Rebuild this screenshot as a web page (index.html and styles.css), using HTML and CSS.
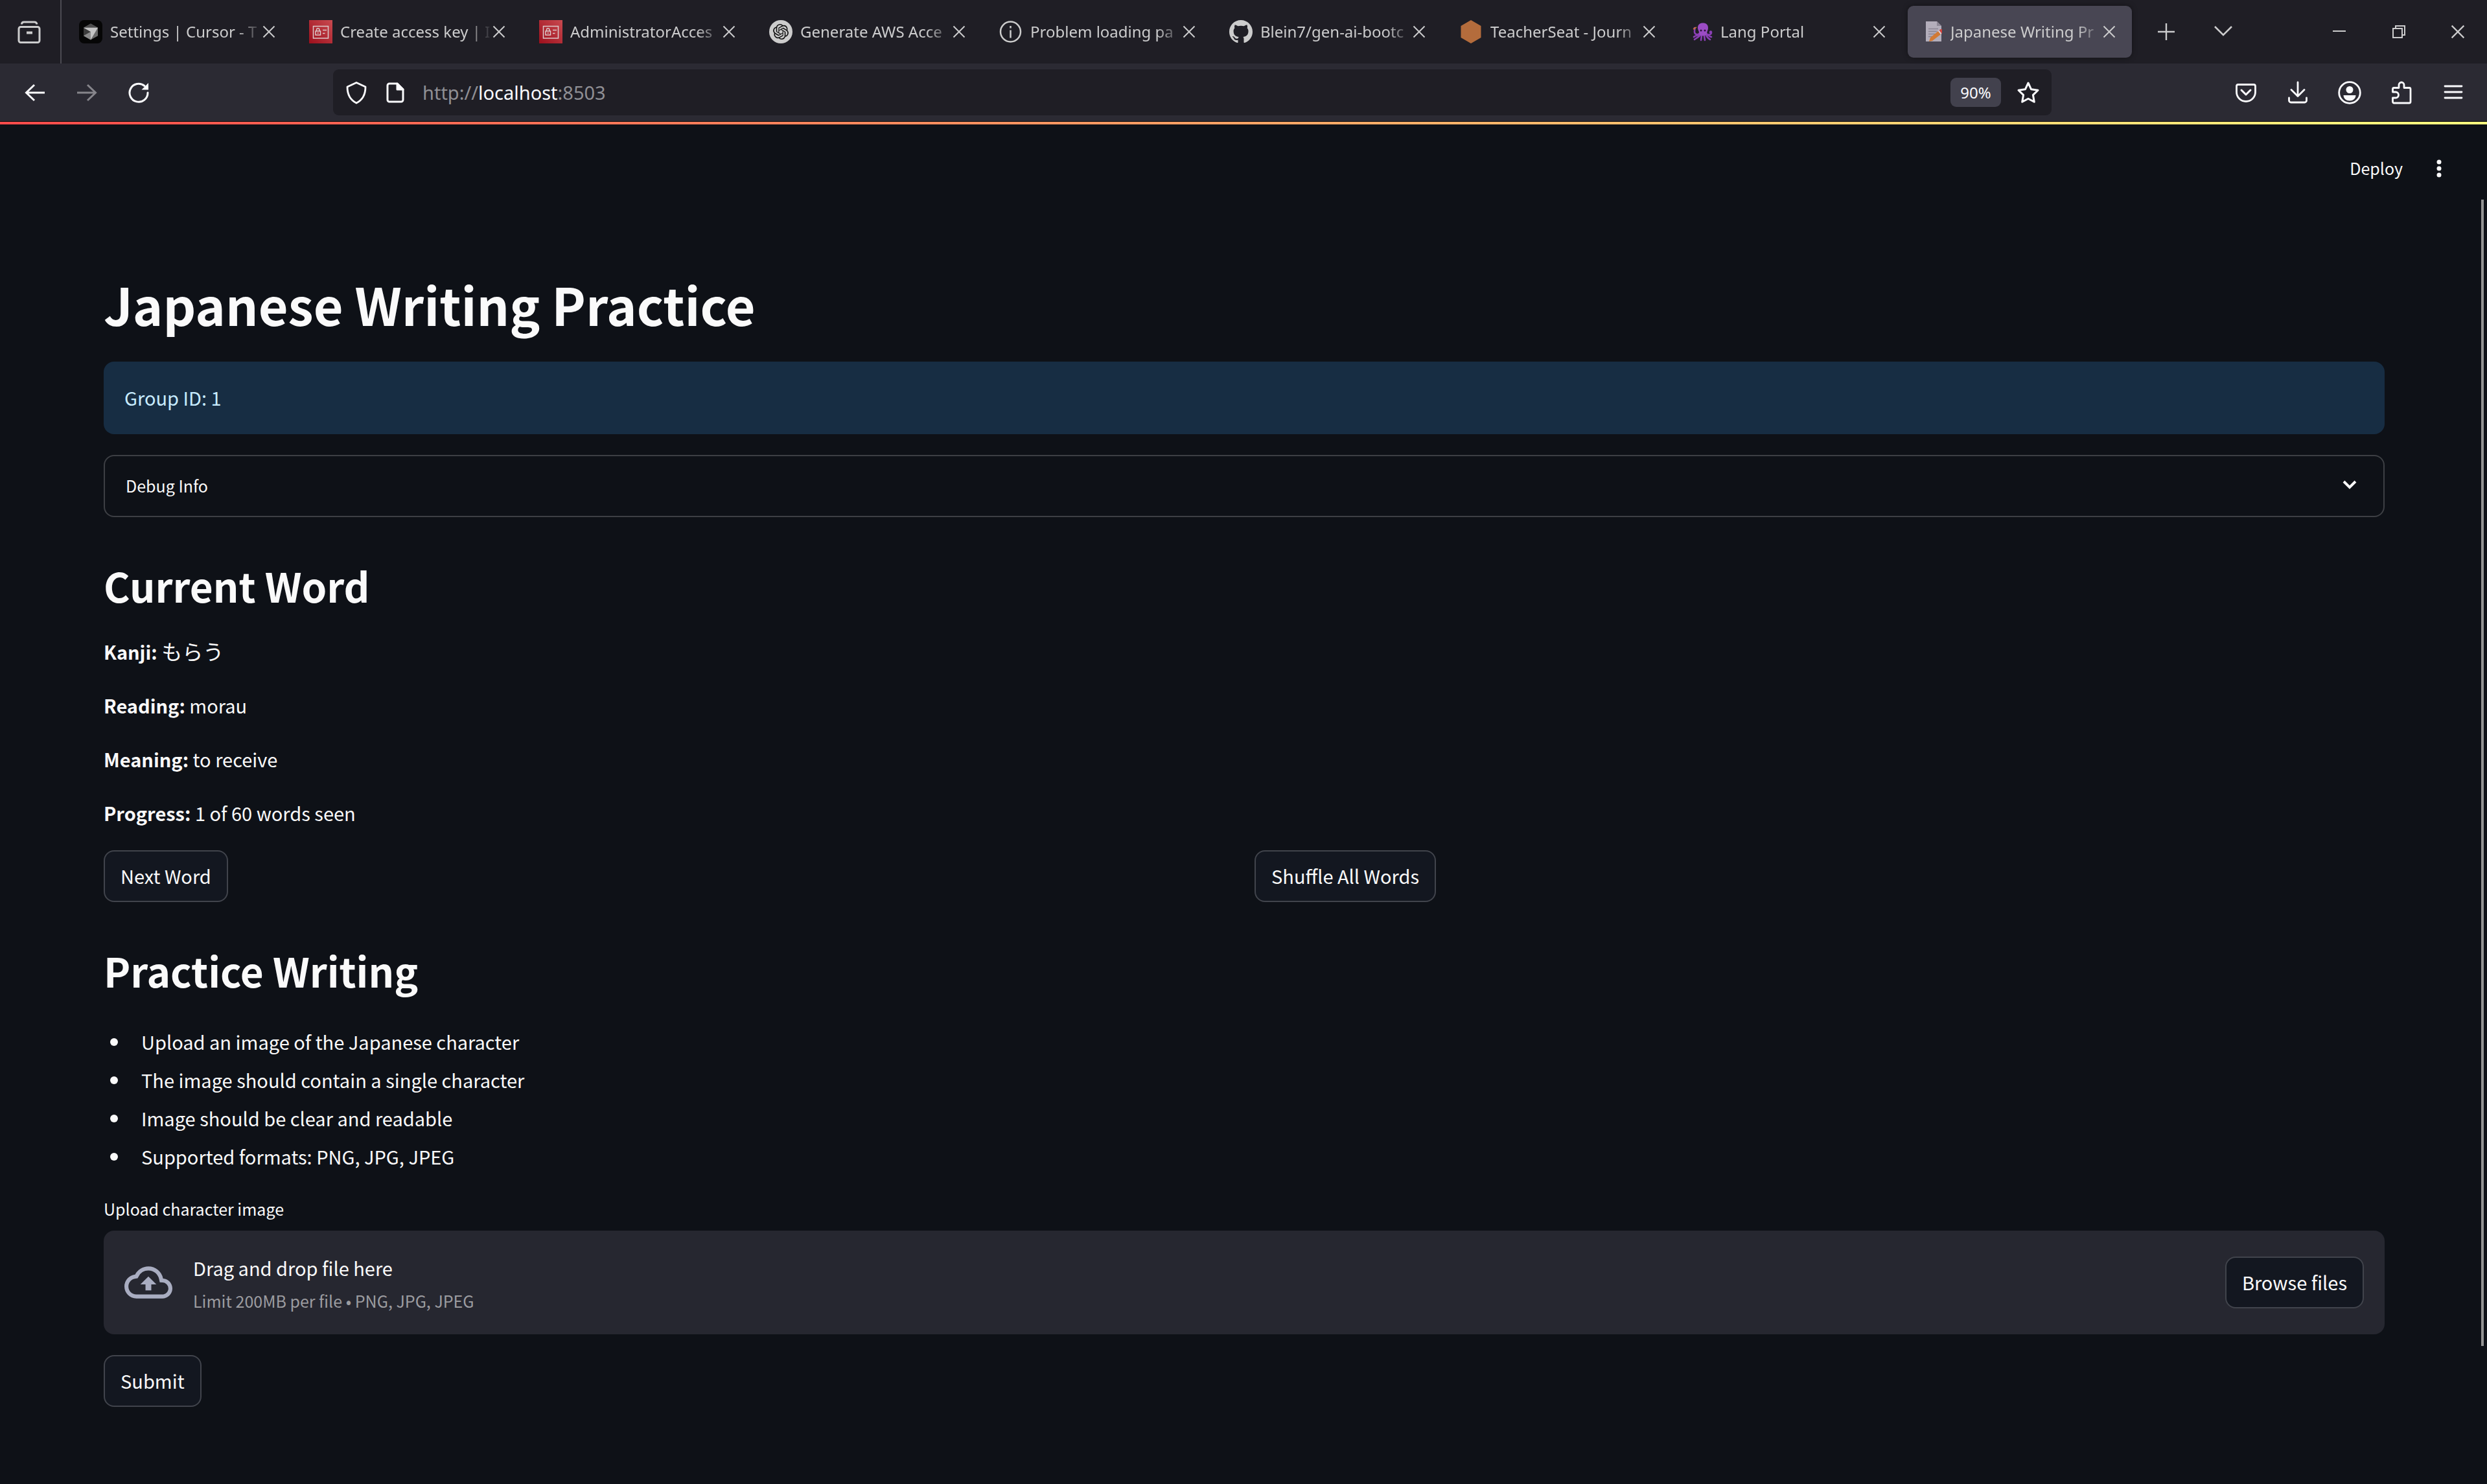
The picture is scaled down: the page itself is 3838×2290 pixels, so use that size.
FILE: index.html
```html
<!DOCTYPE html>
<html lang="en">
<head>
<meta charset="utf-8">
<title>Japanese Writing Practice</title>
<meta name="viewport" content="width=device-width, initial-scale=1">
<link rel="stylesheet" href="styles.css">
</head>
<body>
<svg class="sprite" aria-hidden="true">
  <symbol id="i-close" viewBox="0 0 20 20"><path d="M1.500 1.500l17 17M18.500 1.500l-17 17" fill="none" stroke="currentColor" stroke-width="2"/></symbol>
  <symbol id="i-key" viewBox="0 0 36 36">
    <rect width="36" height="36" fill="url(#red)"/>
    <g fill="none" stroke="#dcc9ca" stroke-width="1.500"><rect x="6.500" y="9.500" width="23" height="18.500"/><rect x="10" y="17" width="7.500" height="6"/><path d="M11.500 17v-2a2.200 2.200 0 0 1 4.400 0V17M21 15.500h6M21 20.500h3.500M13.700 19v2"/></g>
  </symbol>
  <linearGradient id="red" x1="0" y1="1" x2="1" y2="0"><stop offset="0" stop-color="#9c0f1c"/><stop offset="1" stop-color="#c94a50"/></linearGradient>
</svg>

<header class="browser">
  <div class="tabstrip">
    <button class="icon-btn view-btn" aria-label="Recent browsing">
      <svg width="36" height="36" viewBox="0 0 36 36" fill="none" stroke="currentColor" stroke-width="3"><rect x="2" y="10.500" width="32" height="24" rx="3"/><path d="M6.500 6.500Q6.500 3 10 3h16q3.500 0 4 3.500"/><path d="M14 19.500h9" stroke-width="4"/></svg>
    </button>
    <nav class="tabs" aria-label="Tabs">
      <div class="tab">
        <svg class="favicon" viewBox="0 0 36 36"><rect width="36" height="36" rx="8" fill="#060606"/><path d="M18 5.500l11 6.200v12.600l-11 6.200-11-6.200V11.700z" fill="#6a6a6a"/><path d="M7 11.700L18 5.500l11 6.200z" fill="#4b4b4b"/><path d="M7 11.700L18 18 7 24.300z" fill="#3c3c3c"/><path d="M7 24.300L18 18v12.500z" fill="#8b8b8b"/><path d="M7 11.700h22L18 30.500V18z" fill="#c4c4c4"/></svg>
        <button class="tab-title">Settings | Cursor - T</button>
        <button class="tab-close" aria-label="Close tab"><svg><use href="#i-close"/></svg></button>
      </div>
      <div class="tab">
        <svg class="favicon"><use href="#i-key"/></svg>
        <button class="tab-title">Create access key | I</button>
        <button class="tab-close" aria-label="Close tab"><svg><use href="#i-close"/></svg></button>
      </div>
      <div class="tab">
        <svg class="favicon"><use href="#i-key"/></svg>
        <button class="tab-title">AdministratorAcces</button>
        <button class="tab-close" aria-label="Close tab"><svg><use href="#i-close"/></svg></button>
      </div>
      <div class="tab">
        <svg class="favicon" viewBox="0 0 36 36"><circle cx="18" cy="18" r="18" fill="#ccc"/><path transform="translate(6 6)" fill="#111" d="M22.2819 9.8211a5.9847 5.9847 0 0 0-.5157-4.9108 6.0462 6.0462 0 0 0-6.5098-2.9A6.0651 6.0651 0 0 0 4.9807 4.1818a5.9847 5.9847 0 0 0-3.9977 2.9 6.0462 6.0462 0 0 0 .7427 7.0966 5.98 5.98 0 0 0 .511 4.9107 6.051 6.051 0 0 0 6.5146 2.9001A5.9847 5.9847 0 0 0 13.2599 24a6.0557 6.0557 0 0 0 5.7718-4.2058 5.9894 5.9894 0 0 0 3.9977-2.9001 6.0557 6.0557 0 0 0-.7475-7.0729zm-9.022 12.6081a4.4755 4.4755 0 0 1-2.8764-1.0408l.1419-.0804 4.7783-2.7582a.7948.7948 0 0 0 .3927-.6813v-6.7369l2.02 1.1686a.071.071 0 0 1 .038.052v5.5826a4.504 4.504 0 0 1-4.4945 4.4944zm-9.6607-4.1254a4.4708 4.4708 0 0 1-.5346-3.0137l.142.0852 4.783 2.7582a.7712.7712 0 0 0 .7806 0l5.8428-3.3685v2.3324a.0804.0804 0 0 1-.0332.0615L9.74 19.9502a4.4992 4.4992 0 0 1-6.1408-1.6464zM2.3408 7.8956a4.485 4.485 0 0 1 2.3655-1.9728V11.6a.7664.7664 0 0 0 .3879.6765l5.8144 3.3543-2.0201 1.1685a.0757.0757 0 0 1-.071 0l-4.8303-2.7865A4.504 4.504 0 0 1 2.3408 7.872zm16.5963 3.8558L13.1038 8.364 15.1192 7.2a.0757.0757 0 0 1 .071 0l4.8303 2.7913a4.4944 4.4944 0 0 1-.6765 8.1042v-5.6772a.79.79 0 0 0-.407-.667zm2.0107-3.0231l-.142-.0852-4.7735-2.7818a.7759.7759 0 0 0-.7854 0L9.409 9.2297V6.8974a.0662.0662 0 0 1 .0284-.0615l4.8303-2.7866a4.4992 4.4992 0 0 1 6.6802 4.66zM8.3065 12.863l-2.02-1.1638a.0804.0804 0 0 1-.038-.0567V6.0742a4.4992 4.4992 0 0 1 7.3757-3.4537l-.142.0805L8.704 5.459a.7948.7948 0 0 0-.3927.6813zm1.0976-2.3654l2.602-1.4998 2.6069 1.4998v2.9994l-2.5974 1.4997-2.6067-1.4997Z"/></svg>
        <button class="tab-title">Generate AWS Acce</button>
        <button class="tab-close" aria-label="Close tab"><svg><use href="#i-close"/></svg></button>
      </div>
      <div class="tab">
        <svg class="favicon" viewBox="0 0 36 36" fill="none" stroke="#ccc" stroke-width="2.500"><circle cx="17.500" cy="18" r="15.500"/><path d="M17.500 15.500v12M17.500 9v3.500"/></svg>
        <button class="tab-title">Problem loading pa</button>
        <button class="tab-close" aria-label="Close tab"><svg><use href="#i-close"/></svg></button>
      </div>
      <div class="tab">
        <svg class="favicon" viewBox="0 0 16 16"><path fill="#ccc" d="M8 0C3.580 0 0 3.580 0 8c0 3.540 2.290 6.530 5.470 7.590.4.070.55-.17.55-.38 0-.19-.01-.82-.01-1.490-2.010.37-2.530-.49-2.690-.94-.09-.23-.48-.94-.82-1.130-.28-.15-.68-.52-.01-.53.63-.01 1.080.58 1.230.82.72 1.210 1.870.87 2.330.66.070-.52.28-.87.51-1.070-1.780-.2-3.640-.89-3.640-3.950 0-.87.31-1.590.82-2.150-.08-.2-.36-1.020.08-2.120 0 0 .67-.21 2.200.82.64-.18 1.320-.27 2-.27s1.360.09 2 .27c1.530-1.040 2.200-.82 2.200-.82.44 1.100.16 1.920.08 2.120.51.56.82 1.270.82 2.150 0 3.070-1.870 3.750-3.650 3.950.29.25.54.73.54 1.480 0 1.070-.01 1.930-.01 2.200 0 .21.15.46.55.38A8.010 8.010 0 0 0 16 8c0-4.420-3.580-8-8-8z"/></svg>
        <button class="tab-title">Blein7/gen-ai-bootc</button>
        <button class="tab-close" aria-label="Close tab"><svg><use href="#i-close"/></svg></button>
      </div>
      <div class="tab">
        <svg class="favicon" viewBox="0 0 36 36"><path d="M18 0l15.500 9v18L18 36 2.500 27V9z" fill="#b46c3c"/></svg>
        <button class="tab-title">TeacherSeat - Journ</button>
        <button class="tab-close" aria-label="Close tab"><svg><use href="#i-close"/></svg></button>
      </div>
      <div class="tab">
        <svg class="favicon" viewBox="0 0 36 36"><g fill="none" stroke="#8a3fb5" stroke-width="2.600" stroke-linecap="round"><path d="M16 20c-3 4-8 2-8-2s1-3 0-6M26 20c2 4 8 3 8-1 0-2-2-2-2 0M15 22c-3 3-5 1-8 4M27 22c3 1 4 4 7 4M17 23c-2 3-5 4-9 7M19 24l-1 7M23 24l1 7M26 23c1 3 3 5 6 7"/></g><path d="M13 12c0-5 3-7.500 8-7.500s8 2.500 8 7.500c0 4-2 5-2 10-3 3-9 3-12 0 1-5-2-6-2-10z" fill="#9b4cc4"/><circle cx="18" cy="16" r="1.500" fill="#2b1238"/><circle cx="24" cy="16" r="1.500" fill="#2b1238"/><path d="M6 14l5-3" stroke="#d07a30" stroke-width="1.500"/></svg>
        <button class="tab-title">Lang Portal</button>
        <button class="tab-close" aria-label="Close tab"><svg><use href="#i-close"/></svg></button>
      </div>
      <div class="tab is-active">
        <svg class="favicon" viewBox="0 0 36 36"><path d="M10 2h17l7 7v24H10z" fill="#b3aebb"/><path d="M27 2v7h7z" fill="#8d8896"/><path d="M14 13.500h15M14 17.500h13M14 21.500h10M14 25.500h6" stroke="#8a8592" stroke-width="1.500"/><path d="M17 27L29 17l4 5-13 10-5 1z" fill="#d27a35"/><path d="M29 17l1.500-1.200 4 5L33 22z" fill="#ddd5dc"/><path d="M30.500 15.800L33 14h2v6.500l-.5.300z" fill="#d0453f"/></svg>
        <button class="tab-title">Japanese Writing Pr</button>
        <button class="tab-close" aria-label="Close tab"><svg><use href="#i-close"/></svg></button>
      </div>
    </nav>
    <div class="strip-actions">
      <button class="icon-btn" aria-label="New tab"><svg width="28" height="28" viewBox="0 0 28 28"><path d="M14 1v26M1 14h26" stroke="currentColor" stroke-width="2.400"/></svg></button>
      <button class="icon-btn" aria-label="List all tabs"><svg width="28" height="28" viewBox="0 0 28 28" fill="none"><path d="M1 6l13 13L27 6" stroke="currentColor" stroke-width="2.600"/></svg></button>
    </div>
    <div class="window-controls">
      <button class="icon-btn" aria-label="Minimize"><svg width="22" height="22" viewBox="0 0 22 22"><path d="M1 10h20" stroke="currentColor" stroke-width="2"/></svg></button>
      <button class="icon-btn" aria-label="Restore"><svg width="22" height="22" viewBox="0 0 22 22" fill="none" stroke="currentColor" stroke-width="2"><rect x="2" y="6" width="14" height="14"/><path d="M6 6V2h14v14h-4"/></svg></button>
      <button class="icon-btn" aria-label="Close window"><svg width="22" height="22"><use href="#i-close"/></svg></button>
    </div>
  </div>

  <div class="toolbar">
    <div class="nav-actions">
      <button class="icon-btn" aria-label="Back"><svg width="36" height="36" viewBox="0 0 36 36" fill="none" stroke="currentColor" stroke-width="3"><path d="M33 18H4M17 6L4.500 18 17 30"/></svg></button>
      <button class="icon-btn is-disabled" aria-label="Forward"><svg width="36" height="36" viewBox="0 0 36 36" fill="none" stroke="currentColor" stroke-width="3"><path d="M3 18h29M19 6l12.500 12L19 30"/></svg></button>
      <button class="icon-btn" aria-label="Reload"><svg width="36" height="36" viewBox="0 0 36 36" fill="none" stroke="currentColor" stroke-width="3" stroke-linecap="round"><path d="M32 18a14 14 0 1 1-5-10.500"/><path d="M33 3v10.500H22.500z" fill="currentColor" stroke="none"/></svg></button>
    </div>
    <div class="urlbar">
      <button class="icon-btn" aria-label="Tracking protection"><svg width="36" height="36" viewBox="0 0 36 36" fill="none" stroke="currentColor" stroke-width="2.800" stroke-linejoin="round"><path d="M18 2.500l14 6.500c0 12-4 20-14 25C8 29 4 21 4 9z"/></svg></button>
      <button class="icon-btn" aria-label="Site information"><svg width="36" height="36" viewBox="0 0 36 36" fill="none" stroke="currentColor" stroke-width="3" stroke-linejoin="round"><path d="M21 4H9a3 3 0 0 0-3 3v22a3 3 0 0 0 3 3h18a3 3 0 0 0 3-3V13z"/><path d="M21 4v9h9z" fill="currentColor"/></svg></button>
      <a class="url" href="#">http://<b>localhost</b>:8503</a>
      <button class="zoom">90%</button>
      <button class="icon-btn" aria-label="Bookmark"><svg width="36" height="36" viewBox="0 0 36 36" fill="none" stroke="currentColor" stroke-width="3" stroke-linejoin="round"><path d="M18 3l4.600 9.800L33 14.200l-7.600 7.400 1.900 10.700L18 27.200l-9.300 5.100 1.900-10.700L3 14.200l10.400-1.400z"/></svg></button>
    </div>
    <div class="tool-actions">
      <button class="icon-btn" aria-label="Save to Pocket"><svg width="36" height="36" viewBox="0 0 36 36" fill="none" stroke="currentColor" stroke-width="2.800" stroke-linecap="round" stroke-linejoin="round"><path d="M3.500 8a2.500 2.500 0 0 1 2.500-2.500h24A2.500 2.500 0 0 1 32.500 8v9a14.500 14.500 0 0 1-29 0z"/><path d="M11 14l7 7 7-7" stroke-width="3"/></svg></button>
      <button class="icon-btn" aria-label="Downloads"><svg width="36" height="36" viewBox="0 0 36 36" fill="none" stroke="currentColor" stroke-width="2.800" stroke-linecap="round" stroke-linejoin="round"><path d="M18 2v21M8 13.500l10 10 10-10M4.500 26v4a3 3 0 0 0 3 3h21a3 3 0 0 0 3-3v-4"/></svg></button>
      <button class="icon-btn" aria-label="Account"><svg width="36" height="36" viewBox="0 0 36 36"><circle cx="18" cy="18" r="16.300" fill="none" stroke="currentColor" stroke-width="2.800"/><circle cx="18" cy="13.500" r="5.500" fill="currentColor"/><path d="M8.500 22h19c0 5-4.500 8.500-9.500 8.500S8.500 27 8.500 22z" fill="currentColor"/></svg></button>
      <button class="icon-btn" aria-label="Extensions"><svg width="36" height="36" viewBox="0 0 36 36" fill="none" stroke="currentColor" stroke-width="2.800" stroke-linejoin="round"><path d="M4.500 17v-4.500a2 2 0 0 1 2-2h7.500V6a4 4 0 0 1 8 0v4.500h8a2 2 0 0 1 2 2V32a2 2 0 0 1-2 2H6.500a2 2 0 0 1-2-2v-6H9a4.500 4.500 0 0 0 0-9z"/></svg></button>
      <button class="icon-btn" aria-label="Menu"><svg width="36" height="36" viewBox="0 0 36 36"><path d="M5 8h26M5 17h26M5 26h26" stroke="currentColor" stroke-width="2.800" stroke-linecap="round"/></svg></button>
    </div>
  </div>
</header>

<div class="app">
  <div class="decoration"></div>
  <header class="app-header">
    <button class="deploy">Deploy</button>
    <button class="icon-btn" aria-label="Main menu"><svg width="36" height="36" viewBox="0 0 36 36" fill="currentColor"><circle cx="18" cy="8" r="3.500"/><circle cx="18" cy="18" r="3.500"/><circle cx="18" cy="28" r="3.500"/></svg></button>
  </header>
  <div class="scroll-thumb"></div>

  <main class="content">
    <h1>Japanese Writing Practice</h1>
    <div class="alert" role="status">Group ID: 1</div>
    <details class="expander">
      <summary>Debug Info<svg width="36" height="36" viewBox="0 0 36 36" fill="none"><path d="M9 12l9 9 9-9" stroke="currentColor" stroke-width="4"/></svg></summary>
    </details>

    <h2>Current Word</h2>
    <p><strong>Kanji:</strong> <span class="kana" lang="ja">もらう</span></p>
    <p><strong>Reading:</strong> morau</p>
    <p><strong>Meaning:</strong> to receive</p>
    <p><strong>Progress:</strong> 1 of 60 words seen</p>
    <div class="columns">
      <div><button class="btn">Next Word</button></div>
      <div><button class="btn">Shuffle All Words</button></div>
    </div>

    <h2>Practice Writing</h2>
    <ul class="notes">
      <li>Upload an image of the Japanese character</li>
      <li>The image should contain a single character</li>
      <li>Image should be clear and readable</li>
      <li>Supported formats: PNG, JPG, JPEG</li>
    </ul>
    <label class="upload-label" for="browse">Upload character image</label>
    <section class="dropzone">
      <svg class="cloud" viewBox="0 0 24 24" fill="currentColor"><path d="M19.350 10.040A7.490 7.490 0 0 0 12 4C9.110 4 6.600 5.640 5.350 8.040A5.994 5.994 0 0 0 0 14c0 3.310 2.690 6 6 6h13c2.760 0 5-2.240 5-5 0-2.640-2.050-4.780-4.650-4.960zM19 18H6c-2.210 0-4-1.790-4-4 0-2.050 1.530-3.760 3.560-3.970l1.070-.11.5-.95A5.469 5.469 0 0 1 12 6c2.620 0 4.880 1.860 5.390 4.430l.3 1.500 1.530.11A2.980 2.980 0 0 1 22 15c0 1.650-1.350 3-3 3zM8 13h2.550v3h2.900v-3H16l-4-4z"/></svg>
      <div class="drop-text">
        <span>Drag and drop file here</span>
        <small>Limit 200MB per file • PNG, JPG, JPEG</small>
      </div>
      <button class="btn" id="browse">Browse files</button>
    </section>
    <button class="btn">Submit</button>
  </main>
</div>
</body>
</html>
```

FILE: styles.css
```css
:root {
  --ui: "Noto Sans", "Open Sans", sans-serif;
  --app: "Noto Sans CJK JP", sans-serif;
  --text: #fafafa;
  --line: rgba(250, 250, 250, 0.2);
}

* { box-sizing: border-box; }

body {
  margin: 0;
  min-height: 100vh;
  display: flex;
  flex-direction: column;
  background: #0e1117;
  color: var(--text);
  font: 29px/51px var(--app);
}

button {
  margin: 0;
  padding: 0;
  border: 0;
  background: none;
  color: inherit;
  font: inherit;
}

svg { display: block; }
.sprite { position: absolute; width: 0; height: 0; }

.icon-btn {
  display: grid;
  place-items: center;
  flex: none;
}

/* Browser frame */
.browser {
  background: #2b2a33;
  color: #fbfbfe;
  font: 24px/32px var(--ui);
  border-bottom: 1px solid #0c0c0d;
}

.tabstrip {
  display: flex;
  height: 98px;
  background: #1f1e25;
  color: #cccccd;
}

.view-btn {
  width: 95px;
  padding-right: 4px;
  border-right: 2px solid #4b4a52;
}

.tabs {
  display: flex;
  flex: 0 1 3204px;
  gap: 9px;
  padding: 9px;
  min-width: 0;
}

.tab {
  display: flex;
  align-items: center;
  flex: 1;
  min-width: 0;
  padding: 0 25px 0 18px;
  border-radius: 9px;
}

.tab.is-active {
  background: #484653;
  box-shadow: 0 0 9px rgba(0, 0, 0, 0.4);
}

.favicon {
  flex: none;
  width: 36px;
  height: 36px;
  margin-right: 12px;
}

.tab-title {
  flex: 1;
  min-width: 0;
  overflow: hidden;
  white-space: nowrap;
  text-align: left;
  mask-image: linear-gradient(to left, transparent, #000 40px);
}

.tab-close svg { width: 20px; height: 20px; }

.strip-actions { display: flex; }
.strip-actions .icon-btn { width: 88px; }

.window-controls { display: flex; margin-left: auto; }
.window-controls .icon-btn { width: 92px; }
.window-controls .icon-btn:last-child { width: 90px; }

.toolbar {
  display: flex;
  align-items: center;
  height: 89px;
}

.nav-actions { display: flex; padding: 0 260px 0 14px; }
.nav-actions .icon-btn,
.tool-actions .icon-btn { width: 80px; }
.is-disabled { color: #86858b; }

.urlbar {
  display: flex;
  align-items: center;
  flex: 1;
  gap: 24px;
  height: 71px;
  padding: 0 18px;
  border-radius: 9px;
  background: #1f1e25;
}

.url {
  flex: 1;
  color: #8f8f94;
  font-size: 29px;
  text-decoration: none;
}

.url b { color: #fbfbfe; font-weight: 400; }

.zoom {
  width: 78px;
  height: 45px;
  border-radius: 9px;
  background: #42414d;
}

.tool-actions { display: flex; padding: 0 12px 0 260px; }

/* Streamlit page */
.app {
  position: relative;
  flex: 1;
}

.decoration {
  height: 4px;
  background: linear-gradient(90deg, #ff4b4b, #fffd80);
}

.app-header {
  display: flex;
  align-items: center;
  justify-content: flex-end;
  gap: 38px;
  height: 136px;
  padding-right: 56px;
}

.deploy {
  padding-bottom: 2px;
  font-size: 25px;
}

.scroll-thumb {
  position: absolute;
  top: 120px;
  right: 5px;
  bottom: 213px;
  width: 4px;
  background: #939393;
}

.content { padding: 88px 158px 100px 160px; }

h1 {
  margin: 0 0 36px;
  font: 700 79px/106px var(--app);
}

h2 {
  margin: 0;
  font: 600 62px/86px var(--app);
}

.alert {
  height: 112px;
  padding: 30px 32px;
  border-radius: 16px;
  background: #172d43;
  color: #c7ebff;
}

.expander {
  margin: 32px 0 62px;
  border: 2px solid var(--line);
  border-radius: 16px;
}

.expander summary {
  display: flex;
  align-items: center;
  justify-content: space-between;
  height: 92px;
  padding: 0 34px 2px 32px;
  font-size: 25px;
  list-style: none;
}

p { margin: 0 0 32px; }
h2 + p { margin-top: 33px; }
.kana { font-size: 32px; }

.columns {
  display: grid;
  grid-template-columns: 1fr 1fr;
  gap: 32px;
  margin-bottom: 62px;
}

.btn {
  height: 80px;
  padding: 0 24px 2px;
  border: 2px solid #41444c;
  border-radius: 16px;
  background: #131720;
  white-space: nowrap;
}

.notes {
  margin: 38px 0 26px;
  padding: 0 0 0 10px;
  line-height: 59px;
  list-style: none;
}

.notes li {
  display: flex;
  align-items: center;
  gap: 36px;
}

.notes li::before {
  content: "";
  width: 12px;
  height: 12px;
  border-radius: 50%;
  background: currentColor;
}

.upload-label {
  display: block;
  font-size: 25px;
}

.dropzone {
  display: flex;
  align-items: center;
  height: 160px;
  margin: 8px 0 32px;
  padding: 0 32px;
  border-radius: 16px;
  background: #262730;
}

.cloud {
  width: 74px;
  height: 74px;
  margin-right: 32px;
  color: #a9adc1;
}

.drop-text {
  display: flex;
  flex-direction: column;
  flex: 1;
  padding-top: 6px;
}

.drop-text small {
  color: #9c9ca0;
  font-size: 25px;
}
```
